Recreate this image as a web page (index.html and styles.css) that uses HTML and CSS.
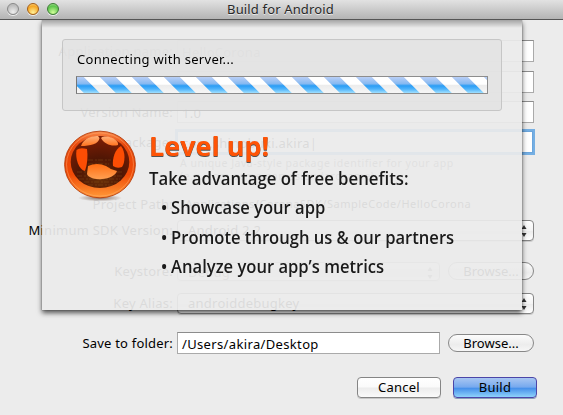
FILE: index.html
```html
<!DOCTYPE html>
<html lang="en">
<head>
<meta charset="utf-8">
<title>Build for Android</title>
<link rel="stylesheet" href="styles.css">
</head>
<body>
<div class="window">
  <header class="titlebar">
    <i class="light gray"></i><i class="light amber"></i><i class="light green"></i>
    <h1>Build for Android</h1>
  </header>
  <main class="form">
    <div class="row app"><label>Application name:</label><span class="field">HelloCorona</span></div>
    <div class="row code"><label></label><span class="field"></span></div>
    <div class="row ver"><label>Version Name:</label><span class="field">1.0</span></div>
    <div class="row pack"><label>Package:</label><span class="field focus">com.shinobuki.akira|</span></div>
    <div class="hint">A unique Java-style package identifier for your app<br>(e.g. com.acme.games.endarcgame)</div>
    <div class="row path"><label>Project Path:</label><span class="plain">/Applications/CoronaSDK/SampleCode/HelloCorona</span></div>
    <div class="row sdk"><label>Minimum SDK Version:</label><span class="popup">Android 2.2<svg class="arrows" viewBox="0 0 6 12"><path d="M3 0L5.5 4h-5zM3 12L.5 8h5z"/></svg></span></div>
    <div class="row store"><label>Keystore:</label><span class="popup short">Debug<svg class="arrows" viewBox="0 0 6 12"><path d="M3 0L5.5 4h-5zM3 12L.5 8h5z"/></svg></span><span class="round">Browse...</span></div>
    <div class="row alias"><label>Key Alias:</label><span class="popup">androiddebugkey<svg class="arrows" viewBox="0 0 6 12"><path d="M3 0L5.5 4h-5zM3 12L.5 8h5z"/></svg></span></div>
    <div class="row save"><label>Save to folder:</label><span class="field folder">/Users/akira/Desktop</span><span class="round">Browse...</span></div>
    <div class="actions"><span class="btn">Cancel</span><span class="btn primary">Build</span></div>
  </main>
  <div class="clip">
  <section class="sheet">
    <div class="panel">
      <p>Connecting with server...</p>
      <div class="progress"></div>
    </div>
    <div class="promo">
      <svg class="orb" viewBox="0 0 74 72">
        <defs>
          <linearGradient id="rim" x1="0" y1="0" x2="0" y2="1"><stop offset="0" stop-color="#f98a4a"/><stop offset=".2" stop-color="#e8480c"/><stop offset=".65" stop-color="#f04a06"/><stop offset="1" stop-color="#ff9a38"/></linearGradient>
          <radialGradient id="core" cx=".5" cy=".8" r=".75"><stop offset="0" stop-color="#6a3108"/><stop offset=".5" stop-color="#501604"/><stop offset="1" stop-color="#7c1d04"/></radialGradient>
          <linearGradient id="patch" x1="0" y1="0" x2="0" y2="1"><stop offset="0" stop-color="#ffb078"/><stop offset="1" stop-color="#ff7420"/></linearGradient>
          <linearGradient id="low" x1="0" y1="0" x2="0" y2="1"><stop offset="0" stop-color="#ff6d12"/><stop offset="1" stop-color="#ffa052"/></linearGradient>
          <radialGradient id="shade"><stop offset="0" stop-color="#5a3a2c" stop-opacity=".7"/><stop offset="1" stop-color="#5a3a2c" stop-opacity="0"/></radialGradient>
        </defs>
        <ellipse cx="37" cy="68" rx="22" ry="3.4" fill="url(#shade)"/>
        <ellipse cx="37" cy="34.5" rx="35.4" ry="33.3" fill="url(#rim)" stroke="#b5400f" stroke-width=".9"/>
        <ellipse cx="37" cy="34.5" rx="33.5" ry="31.6" fill="none" stroke="#ffad72" stroke-width=".8" opacity=".6"/>
        <ellipse cx="37" cy="32" rx="29.3" ry="26" fill="url(#core)"/>
        <g stroke="#9a6420" stroke-width=".7" opacity=".45" stroke-dasharray="5 2 2 1"><path d="M14 46h45M16 49h41M21 52h34M14 42h47M25 55h25M25 30h23M25 34h21M25 38h22"/></g>
        <path d="M18 16C20 9 28 5.500 35 6L36.500 8C36 14 27 16 18 16Z" fill="url(#patch)"/>
        <path d="M38 8Q39 6 43 6.500C50 7 56 11 55 15C49 17 41 14 38 8Z" fill="url(#patch)"/>
        <path d="M13.500 20Q17 17 24 19C25 26 24.500 34 22 41C16 40 12 29 13.500 20Z" fill="#fc4d04"/>
        <path d="M58 16C63 22 62 33 59 37Q54 39 50 36C49 29 52 19 58 16Z" fill="#fc4d04"/>
        <path d="M25 36Q34 32 43 36Q48 40 54 41C53 45 46 49 39 49C31 50 25 47 24 44Z" fill="url(#low)"/>
      </svg>
      <div class="pitch">
        <h2>Level up!</h2>
        <p class="lead">Take advantage of free benefits:</p>
        <ul><li>Showcase your app</li><li>Promote through us &amp; our partners</li><li>Analyze your app’s metrics</li></ul>
      </div>
    </div>
  </section>
  </div>
</div>
</body>
</html>
```
FILE: styles.css
```css
* { box-sizing: border-box; }
body { margin: 0; background: #ececec; font: 13px/18px "Noto Sans", "Open Sans", sans-serif; color: #000; letter-spacing: .25px; }
h1, h2, p, ul { margin: 0; padding: 0; }
.window { position: relative; width: 563px; height: 415px; overflow: hidden; }
.titlebar { height: 20px; display: flex; gap: 8px; padding: 3px 7px; background: linear-gradient(#e2e2e2, #b4b4b4); border-bottom: 1px solid #555; position: relative; }
.titlebar h1 { position: absolute; left: 0; right: 2px; top: 0; text-align: center; font-size: 13px; font-weight: 400; line-height: 18px; color: #282828; text-shadow: 0 1px 0 #e8e8e8; letter-spacing: .15px; }
.light { width: 12px; height: 12px; border-radius: 50%; border: 1px solid #777; box-shadow: 0 1px 0 #eee; }
.gray { background: radial-gradient(circle at 50% 80%, #eee, #bdbdbd 70%); border-color: #888; }
.amber { background: radial-gradient(circle at 50% 85%, #fff09a, #f5a623 65%, #fde0a0); border-color: #a35c14; }
.green { background: radial-gradient(circle at 50% 85%, #d2ff9a, #5cc44c 65%, #b9eaa5); border-color: #3c7a34; }
.form { padding-top: 16px; }
.row { display: flex; align-items: center; height: 30px; }
.row label { width: 173px; text-align: right; margin-right: 4px; white-space: nowrap; }
.field { width: 357px; height: 22px; background: #fff; border: 1px solid #aaa; border-top-color: #8c8c8c; padding: 1px 4px; line-height: 20px; }
.focus { border-color: #6aa5dc; box-shadow: 0 0 0 2px #75afe3; width: 356px; }
.code { margin-top: 1px; }
.hint { height: 26px; margin-left: 180px; font-size: 10.500px; line-height: 13px; letter-spacing: .5px; color: #555; }
.path { height: 28px; margin-top: 7px; }
.plain { font-size: 11px; margin-left: 4px; letter-spacing: .5px; }
.sdk { height: 26px; position: relative; top: -1px; }
.store { height: 28px; margin-top: 13px; }
.alias { height: 28px; margin-top: 4px; }
.popup { position: relative; width: 357px; height: 21px; border: 1px solid #858585; border-radius: 4px; background: linear-gradient(#fff, #f4f4f4 50%, #ebebeb 51%, #fff); padding-left: 10px; box-shadow: 0 1px 0 #ccc; }
.short { width: 263px; height: 19px; margin-right: 8px; opacity: .6; }
.arrows { position: absolute; right: 6px; top: 4px; width: 6px; height: 12px; fill: #333; }
.round { width: 86px; height: 18px; border: 1px solid #888; border-radius: 9px; background: linear-gradient(#fcfcfc, #ececec 60%, #f6f6f6); text-align: center; line-height: 16px; letter-spacing: 0; }
.save { height: 28px; margin-top: 12px; }
.save label { letter-spacing: .2px; }
.folder { width: 263px; margin-right: 8px; letter-spacing: .35px; }
.actions { display: flex; gap: 12px; justify-content: flex-end; margin: 20px 26px 0 0; }
.btn { width: 84px; height: 21px; border: 1px solid #858585; border-radius: 4px; background: linear-gradient(#fff, #fafafa 48%, #ececec 52%, #fafafa); text-align: center; line-height: 19px; box-shadow: 0 1px 0 #c8c8c8; }
.primary { border-color: #4c46a8; background: linear-gradient(#a8c6f2, #76a9ee 48%, #4690ea 54%, #8ed2fb); box-shadow: 0 1px 0 #8a9fb8; }
.clip { position: absolute; left: 0; top: 20px; width: 563px; height: 395px; overflow: hidden; }
.sheet { width: 480px; height: 290px; margin-left: 42px; padding: 19px 20px 0; background: rgba(235,235,235,.93); -webkit-backdrop-filter: blur(.7px); backdrop-filter: blur(.7px); box-shadow: 0 3px 5px rgba(0,0,0,.65), 0 0 1px rgba(0,0,0,.5); position: relative; }
.sheet::before { content: ""; position: absolute; left: 0; right: 0; top: 0; height: 8px; background: linear-gradient(rgba(0,0,0,.3), transparent); }
.panel { height: 72px; border: 1px solid #c6c6c6; border-radius: 3px; background: rgba(226,226,226,.75); padding: 9px 13px; }
.panel p { line-height: 20px; padding-left: 1px; letter-spacing: .3px; }
.progress { position: relative; height: 18px; margin-top: 7px; border: 1px solid #8d8d8d; border-left-color: #777; background: linear-gradient(#fff 45%, #ececec 52%, #f6f6f6); }
.progress::before { content: ""; position: absolute; inset: 0; background: linear-gradient(#bacff6, #86b9f1 42%, #2a9df5 55%, #4eb3fb 75%, #a0e0ff); -webkit-mask: repeating-linear-gradient(45deg, transparent 0 4.600px, #000 5.100px 15.900px, transparent 16.400px 22.630px); mask: repeating-linear-gradient(45deg, transparent 0 4.600px, #000 5.100px 15.900px, transparent 16.400px 22.630px); }
.promo { display: flex; padding-top: 18px; }
.orb { width: 74px; height: 72px; margin: 1px 12px 0 1px; flex: none; }
.pitch { font-family: "Open Sans", "Noto Sans", sans-serif; font-weight: 600; color: #1a1a1a; white-space: nowrap; width: 0; letter-spacing: 0; }
.pitch h2 { font-size: 27px; line-height: 34px; font-weight: 700; color: #ff5406; text-shadow: 0 1px 0 #555; width: max-content; }
.lead { font-size: 18px; line-height: 30px; width: max-content; transform: scaleX(.929); transform-origin: 0 0; }
.pitch ul { list-style: none; padding-left: 12px; }
.pitch li { font-size: 18px; line-height: 29.500px; width: max-content; transform: scaleX(.92); transform-origin: 0 0; }
.pitch li::before { content: "•"; display: inline-block; width: 11px; }
```
